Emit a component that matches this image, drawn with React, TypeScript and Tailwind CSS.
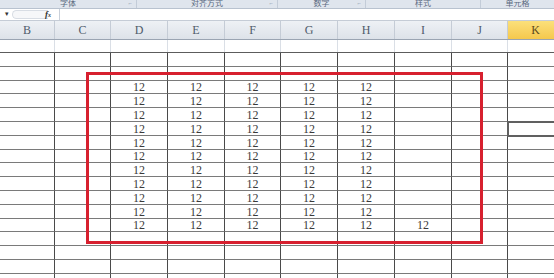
import React from 'react';

const cols = ['B', 'C', 'D', 'E', 'F', 'G', 'H', 'I', 'J', 'K'];
const colWidths = [55, 56, 57, 57, 56, 57, 57, 57, 56, 56];
const rowHeights = [14, 14, 13, 14, 14, 14, 14, 13, 14, 14, 14, 14, 13, 14, 14, 14, 14];

const gridCols = 'grid grid-cols-[55px_56px_57px_57px_56px_57px_57px_57px_56px_56px]';

// which cells hold a value: row index -> column letters
const valueFor = (row: number, col: string) => {
  if (row >= 2 && row <= 12 && ['D', 'E', 'F', 'G', 'H'].includes(col)) return '12';
  if (row === 12 && col === 'I') return '12';
  return '';
};

const groups = [
  { label: '字体', width: 137 },
  { label: '对齐方式', width: 141 },
  { label: '数字', width: 88 },
  { label: '样式', width: 115 },
  { label: '单元格', width: 73 },
];

const App: React.FC = () => {
  return (
    <div className="relative w-[554px] h-[278px] overflow-hidden bg-white font-['Liberation_Serif','Noto_Sans_CJK_SC',serif]">
      {/* ribbon group labels */}
      <div className="flex h-[9px] bg-[#dfe5ed] border-b border-[#b8c2cf] overflow-hidden">
        {groups.map((g, i) => (
          <div
            key={g.label}
            className={`relative flex justify-center ${i < groups.length - 1 ? 'border-r border-[#c3ccd8]' : ''}`}
            style={{ width: g.width }}
          >
            <span className="-mt-[2px] text-[8px] leading-[9px] text-[#5b6a80] font-['Noto_Sans_CJK_SC',sans-serif]">
              {g.label}
            </span>
            {i < 3 && (
              <span className="absolute right-[4px] top-0 text-[6px] leading-[6px] text-[#7a8799]">⌐</span>
            )}
          </div>
        ))}
      </div>

      {/* formula bar */}
      <div className="flex h-[12px] bg-white border-b border-[#c5ccd6]">
        <div className="flex items-center w-[60px] border-r border-[#c9d0da]">
          <span className="ml-[5px] text-[7px] leading-none text-[#333]">▾</span>
          <div className="ml-[3px] h-[9px] w-[36px] rounded-l-full border border-r-0 border-[#d8dde4] bg-[#f6f7f9]" />
          <span className="ml-[-3px] text-[9px] italic font-bold leading-none text-[#333]">f<span className="text-[6px]">x</span></span>
        </div>
        <div className="flex-1" />
      </div>

      {/* column headers */}
      <div className={`${gridCols} h-[19px] border-b border-[#9aa4b2]`}>
        {cols.map((c) => (
          <div
            key={c}
            className={`flex items-center justify-center border-r text-[12px] ${
              c === 'K'
                ? 'bg-gradient-to-b from-[#fbe07a] to-[#f5c84c] border-[#e0b040] text-[#5c4a1c]'
                : 'bg-gradient-to-b from-[#eef1f5] to-[#dde2e9] border-[#c5ccd6] text-[#4f5b6b]'
            }`}
          >
            {c}
          </div>
        ))}
      </div>

      {/* first row: default light gridlines */}
      <div className={`${gridCols} h-[13px] border-b border-[#5c5c5c]`}>
        {cols.map((c) => (
          <div key={c} className="border-r border-[#dadfe6]" />
        ))}
      </div>

      {/* bordered rows */}
      {rowHeights.map((h, r) => (
        <div key={r} className={gridCols} style={{ height: h }}>
          {cols.map((c, ci) => (
            <div
              key={c}
              className="flex items-center justify-center border-r border-b border-r-[#4a4a4a] border-b-[#7a7a7a] text-[12px] leading-none text-[#3a3a3a]"
              style={{ width: colWidths[ci] }}
            >
              {valueFor(r, c)}
            </div>
          ))}
        </div>
      ))}

      {/* active cell K */}
      <div className="absolute left-[507px] top-[121px] w-[60px] h-[16px] border-2 border-[#606060]" />

      {/* red marker rectangle */}
      <div className="absolute left-[86px] top-[72px] w-[397px] h-[172px] border-[3px] border-[#d7202f]" />
    </div>
  );
};

export default App;
